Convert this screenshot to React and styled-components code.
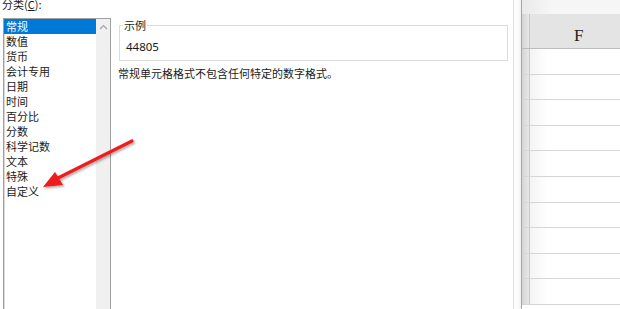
import styled, { createGlobalStyle } from 'styled-components'

const GlobalStyle = createGlobalStyle`
  html, body {
    margin: 0;
    padding: 0;
    background: #ffffff;
    overflow: hidden;
  }
  body {
    font-family: "Noto Sans CJK SC", "Microsoft YaHei", sans-serif;
    font-size: 11px;
    color: #1a1a1a;
  }
`

const categories = ['常规', '数值', '货币', '会计专用', '日期', '时间', '百分比', '分数', '科学记数', '文本', '特殊', '自定义']

const App = () => {

  return (

    <Screen>

      <GlobalStyle />

      <Dialog>

        <CategoryLabel>分类(<u>C</u>):</CategoryLabel>

        <Body>

          <ListBox>

            <Items>
              {categories.map((name, i) => (
                <Item key={name} selected={i === 0}>{name}</Item>
              ))}
            </Items>

            <ScrollBar>
              <svg width="9" height="6" viewBox="0 0 9 6">
                <path d="M1 5 L4.5 1.5 L8 5" fill="none" stroke="#a3a3a3" strokeWidth="1.2" />
              </svg>
            </ScrollBar>

          </ListBox>

          <RightPanel>

            <SampleGroup>
              <Legend>示例</Legend>
              <SampleValue>44805</SampleValue>
            </SampleGroup>

            <Description>常规单元格格式不包含任何特定的数字格式。</Description>

          </RightPanel>

        </Body>

      </Dialog>

      <WindowEdge />

      <Sheet>

        <SheetTop />

        <HeaderRow>
          <RowHeadCell />
          <ColumnHead>F</ColumnHead>
        </HeaderRow>

        {Array.from({ length: 10 }).map((_, i) => (
          <Row key={i}>
            <RowHeadCell />
            <Cell />
          </Row>
        ))}

      </Sheet>

      <Arrow width="620" height="309" viewBox="0 0 620 309">
        <defs>
          <filter id="shadow" x="-20%" y="-20%" width="140%" height="140%">
            <feDropShadow dx="1.5" dy="1.5" stdDeviation="1.2" floodColor="#000" floodOpacity="0.35" />
          </filter>
        </defs>
        <g filter="url(#shadow)">
          <line x1="132" y1="141" x2="58" y2="178" stroke="#ee1c1c" strokeWidth="3.2" strokeLinecap="round" />
          <polygon points="43,187 55,172 63,185" fill="#ee1c1c" />
        </g>
      </Arrow>

    </Screen>

  )

}

const Screen = styled.div`
  position: relative;
  display: flex;
  width: 620px;
  height: 309px;
  overflow: hidden;
`

const Dialog = styled.div`
  width: 513px;
  flex: none;
  display: flex;
  flex-direction: column;
  background: #ffffff;
  border-right: 1px solid #e2e2e2;
`

const CategoryLabel = styled.div`
  flex: none;
  margin: -3px 0 0 2px;
  height: 21px;
  line-height: 15px;
  font-size: 11px;
  color: #1a1a1a;

  u {
    text-decoration-thickness: 1px;
    text-underline-offset: 1px;
  }
`

const Body = styled.div`
  flex: 1;
  display: flex;
  padding-left: 3px;
`

const ListBox = styled.div`
  width: 106px;
  flex: none;
  display: flex;
  border: 1px solid #a0a0a0;
  border-bottom: none;
  box-shadow: inset 1px 0 0 #d8d8d8;
`

const Items = styled.div`
  flex: 1;
`

const Item = styled.div`
  height: 15px;
  line-height: 15px;
  padding-left: 2px;
  font-size: 11px;
  white-space: nowrap;
  background: ${p => (p.selected ? '#0078d7' : 'transparent')};
  color: ${p => (p.selected ? '#ffffff' : '#1a1a1a')};
`

const ScrollBar = styled.div`
  width: 14px;
  flex: none;
  background: #f0f0f0;
  display: flex;
  justify-content: center;
  align-items: flex-start;
  padding-top: 5px;
  box-sizing: border-box;
`

const RightPanel = styled.div`
  flex: 1;
  display: flex;
  flex-direction: column;
  align-items: stretch;
  padding: 1px 5px 0 8px;
`

const SampleGroup = styled.fieldset`
  margin: 0;
  padding: 0 0 5px 3px;
  border: 1px solid #dcdcdc;
`

const Legend = styled.legend`
  padding: 0 1px;
  font-size: 11px;
  line-height: 12px;
  color: #1a1a1a;
`

const SampleValue = styled.div`
  margin: 8px 0 0 3px;
  height: 16px;
  line-height: 16px;
  font-family: "Noto Sans", "Segoe UI", sans-serif;
  font-size: 11.5px;
  color: #1a1a1a;
`

const Description = styled.div`
  margin: 5px 0 0 -1px;
  font-size: 11px;
  line-height: 14px;
  color: #1a1a1a;
`

const WindowEdge = styled.div`
  width: 7px;
  flex: none;
  background: linear-gradient(to right, #f7f7f7, #ffffff 30%, #f2f2f2);
  border-right: 1px solid #a5a5a5;
`

const Sheet = styled.div`
  flex: 1;
  display: flex;
  flex-direction: column;
  background: #ffffff;
`

const SheetTop = styled.div`
  height: 14px;
  background: linear-gradient(to right, #e9e9e9, #f6f6f6 30%, #f6f6f6);
  flex: none;
`

const HeaderRow = styled.div`
  height: 34px;
  flex: none;
  display: flex;
  background: #e4e4e4;
  border-bottom: 1px solid #bdbdbd;
`

const RowHeadCell = styled.div`
  width: 7px;
  flex: none;
  background: linear-gradient(to right, #d4d4d4, #e8e8e8);
  border-right: 1px solid #c8c8c8;
`

const ColumnHead = styled.div`
  flex: 1;
  padding-left: 44px;
  padding-top: 12px;
  font-family: "Liberation Serif", "Times New Roman", serif;
  font-size: 17px;
  color: #222;
  line-height: 20px;
`

const Row = styled.div`
  height: 24.6px;
  flex: none;
  display: flex;
  border-bottom: 1px solid #d6d6d6;
`

const Cell = styled.div`
  flex: 1;
  background: linear-gradient(to right, #f4f4f4, #ffffff 18px);
`

const Arrow = styled.svg`
  position: absolute;
  left: 0;
  top: 0;
  pointer-events: none;
`

export default App
